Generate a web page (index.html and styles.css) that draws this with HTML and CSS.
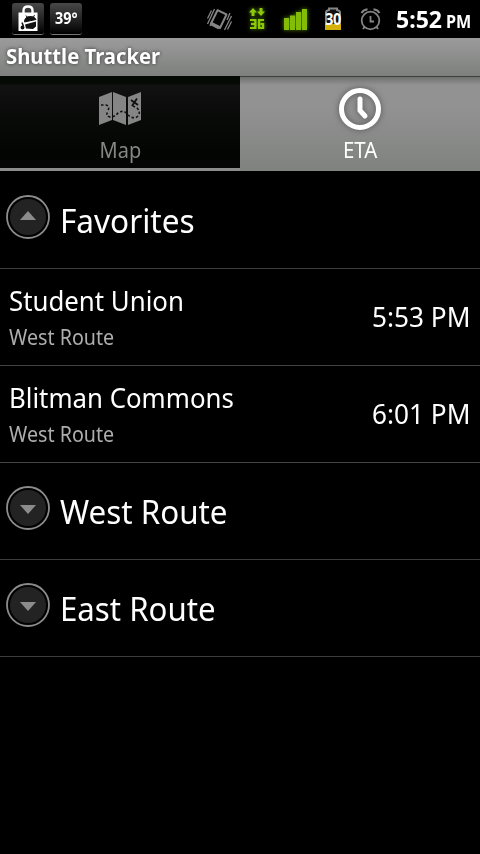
FILE: index.html
```html
<!DOCTYPE html>
<html lang="en">
<head>
<meta charset="utf-8">
<title>Shuttle Tracker</title>
<link rel="stylesheet" href="styles.css">
</head>
<body>
<header class="status">
  <div class="notice">
    <svg width="32" height="32" viewBox="0 0 32 32"><path d="M11.500 11V7.500q0-4 4.500-4t4.500 4V11" fill="none" stroke="#fff" stroke-width="2.400"/><path d="M6.500 9.500h19V28h-19z" fill="#fff"/><path d="M12.500 19q0-5 5-5.500 5-.5 6.500 3zM14 12.500l2 3M22.500 12l-1.500 3" fill="#111" stroke="#111"/><path d="M13 21.500l11-3v5l-3 2.500-7-.5z" fill="#111"/><path d="M10 19.500l1.500 4" stroke="#111" stroke-width="1.500"/><circle cx="10.500" cy="24.500" r="1.900" fill="#111"/></svg>
  </div>
  <div class="notice temp"><span class="temp-text">39°</span></div>
  <svg class="icons" width="184" height="38" viewBox="200 0 184 38">
    <g fill="none" stroke="#858585" stroke-width="1.300"><path d="M207.500 18.500l4-8M207.500 24l7-15M210 26l2-4M231.500 16l-7 14M231.500 21.500l-4 8M227 20l3-7"/><path d="M217.500 10.200l9 4.300-6.500 13.500-9-4.500z" stroke-width="2" stroke-linejoin="round"/><path d="M211.500 22.500l8 4-1.500 2-7.500-4z" fill="#858585"/></g>
    <g class="glow" fill="#8cc80a"><path d="M253 8l4 4.500h-2.500V16h-3v-3.500H249zM261 16l-4-4.500h2.500V8h3v3.500h2.500z"/><path d="M250 19h6.500v10H250v-2h4.200v-2H251v-2h3.200v-2H250zM258 19h6v2h-3.800v6h1.800v-2h-1.500v-2h3.700v6H258z"/></g>
    <g class="glow" fill="#84bd08"><path d="M284 18h5v12h-5zM290 15.500h5V30h-5zM296 12h5v18h-5zM302 9h5v21h-5z"/></g>
    <path d="M326 29V12.500q0-2 3-2.500V8.500h8V10q3 .5 3 2.500V29z" fill="#111" stroke="#858585" stroke-width="2"/>
    <path d="M325 24h16v6h-16z" fill="#d5b20a"/>
    <text class="battery" x="0" y="0" transform="translate(333 25) scale(.9 1)" text-anchor="middle">30</text>
    <g fill="none" stroke="#858585" stroke-width="1.800"><circle cx="370.500" cy="20.500" r="8.800"/><path d="M370.500 16v5.500h3.500"/><path d="M361.500 13q2-3.500 6-3.800M379.500 13q-2-3.500-6-3.800M364.500 27l-1.500 2M376.500 27l1.500 2" stroke-width="2"/></g>
  </svg>
  <div class="clock"><span class="clock-time">5:52</span><span class="clock-pm">PM</span></div>
</header>
<h1 class="title"><span class="title-text">Shuttle Tracker</span></h1>
<nav class="tabs">
  <div class="tab map">
    <svg width="44" height="38" viewBox="0 0 44 38"><path d="M1 7l13-5v28L1 35zM15 2l13 5v28l-13-5zM30 7l13-5v28l-13 5z" fill="#858585"/><path d="M3 15h5q4 1 2 6-3 5 2 6 5 0 8-4 6-4 10 2 6 5 10 1 3-4-1-8l-4-2" fill="none" stroke="#111" stroke-width="1.600" stroke-dasharray="2.500 2"/><path d="M33 10l7 5M39 8.500L34 16" stroke="#111" stroke-width="1.900"/></svg>
    <span class="tab-label map-label">Map</span>
  </div>
  <div class="tab eta">
    <svg class="eta-icon" width="44" height="44" viewBox="0 0 44 44"><g fill="none" stroke="#fff"><circle cx="22" cy="22" r="18.500" stroke-width="5"/><path d="M22 12v11.500l5 5.500" stroke-width="5" stroke-linecap="round" stroke-linejoin="round"/></g></svg>
    <span class="tab-label eta-label">ETA</span>
  </div>
</nav>
<main>
  <section class="row group">
    <svg class="toggle" width="44" height="44" viewBox="0 0 44 44"><circle cx="22" cy="22" r="21" fill="#000" stroke="#8c8c8c" stroke-width="1.800"/><circle cx="22" cy="22" r="18" fill="#222322"/><path d="M14 25l8-9 8 9z" fill="#8c8c8c"/></svg>
    <span class="group-name fav">Favorites</span>
  </section>
  <section class="row stop">
    <div class="info"><div class="name"><span class="su">Student Union</span></div><div class="route"><span class="wr">West Route</span></div></div>
    <span class="time">5:53 PM</span>
  </section>
  <section class="row stop">
    <div class="info"><div class="name"><span class="bc">Blitman Commons</span></div><div class="route"><span class="wr">West Route</span></div></div>
    <span class="time">6:01 PM</span>
  </section>
  <section class="row group">
    <svg class="toggle" width="44" height="44" viewBox="0 0 44 44"><circle cx="22" cy="22" r="21" fill="#000" stroke="#8c8c8c" stroke-width="1.800"/><circle cx="22" cy="22" r="18" fill="#222322"/><path d="M14 19l8 9 8-9z" fill="#8c8c8c"/></svg>
    <span class="group-name west">West Route</span>
  </section>
  <section class="row group">
    <svg class="toggle" width="44" height="44" viewBox="0 0 44 44"><circle cx="22" cy="22" r="21" fill="#000" stroke="#8c8c8c" stroke-width="1.800"/><circle cx="22" cy="22" r="18" fill="#222322"/><path d="M14 19l8 9 8-9z" fill="#8c8c8c"/></svg>
    <span class="group-name east">East Route</span>
  </section>
</main>
</body>
</html>
```
FILE: styles.css
```css
* { box-sizing: border-box; }
body {
  margin: 0;
  width: 480px;
  height: 854px;
  overflow: hidden;
  background: #000;
  color: #fff;
  font-family: "Noto Sans", "Open Sans", sans-serif;
}
svg { display: block; flex: none; }
span { display: inline-block; white-space: nowrap; transform-origin: 0 50%; }

.status { display: flex; height: 38px; padding-left: 12px; }
.notice {
  width: 32px;
  height: 32px;
  margin: 3px 6px 0 0;
  border-bottom: 1px solid #777;
  border-radius: 3px;
  background: linear-gradient(#484848, #222 55%, #000);
}
.temp { font-size: 16px; font-weight: 700; line-height: 31px; padding-left: 5px; }
.temp-text { transform: scaleX(.9); }
.icons { margin-left: 112px; }
.glow { filter: drop-shadow(0 0 2px #5b8900); }
.battery { font: 700 16px "Noto Sans", sans-serif; fill: #fff; letter-spacing: -.5px; }
.clock { display: flex; margin-left: 12px; font-weight: 700; line-height: 38px; }
.clock-time { width: 50px; font-size: 24px; transform: scaleX(.96); }
.clock-pm { font-size: 17px; line-height: 44px; transform: scaleX(.95); }

.title {
  height: 38px;
  margin: 0;
  padding-left: 6px;
  background: linear-gradient(#9b9b9b, #7d807d);
  font-size: 21px;
  line-height: 37px;
  text-shadow: 0 0 4px #333;
}
.title-text { transform: scaleX(.965); }

.tabs { display: flex; height: 95px; background: #000; }
.tab { width: 240px; display: flex; flex-direction: column; align-items: center; }
.tab-label { font-size: 21.5px; line-height: 30px; transform-origin: 50% 50%; }
.map {
  padding-top: 14px;
  border-bottom: 3px solid #8c8c8c;
  background: linear-gradient(#050a05 0, #050a05 8px, #121212 9px, #0b0c0b 30px, #050805 60px, #020302);
  color: #858585;
}
.map-label { margin-top: 7px; transform: scaleX(.93); }
.eta { padding-top: 11px; background: linear-gradient(#3c403c 0, #3c403c 1px, #6e716e 1px, #929292 9px, #929292 30px, #7f827f); }
.eta-icon { filter: drop-shadow(0 0 3px #555); }
.eta-label { margin-top: 4px; transform: scaleX(.95); }

main { padding-top: 1px; }
.row { display: flex; height: 97px; border-bottom: 1px solid #444; }
.row.group { border-color: #3c3c3c; }
.toggle { margin: 23px 10px 0 6px; }
.group-name { font-size: 33px; line-height: 98px; }
.stop { justify-content: space-between; padding: 0 10px 0 9px; }
.info { padding-top: 13px; }
.name { font-size: 27px; line-height: 37px; }
.route { font-size: 22px; line-height: 35px; color: #adadad; }
.time { font-size: 27px; line-height: 96px; transform-origin: 100% 50%; transform: scaleX(.97); }
.fav, .su, .bc { transform: scaleX(.956); }
.west { transform: scaleX(.95); }
.east { transform: scaleX(.945); }
.wr { transform: scaleX(.895); }
```
